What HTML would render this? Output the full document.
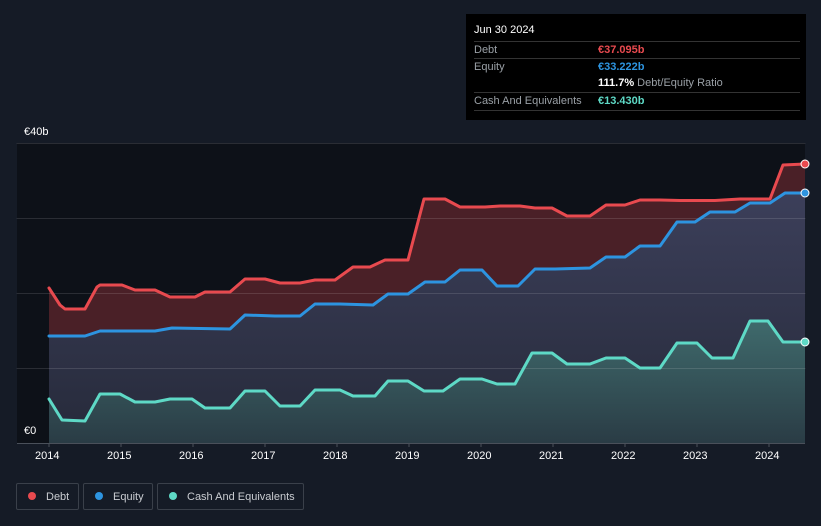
<!DOCTYPE html>
<html><head><meta charset="utf-8"><style>
body{margin:0;width:821px;height:526px;background:#151b26;font-family:"Liberation Sans",sans-serif;overflow:hidden;position:relative}
.tt{position:absolute;left:466px;top:14px;width:340px;height:106px;background:#000;color:#fff;font-size:11px}
.tt .r{position:absolute;left:8px;right:6px;border-top:1px solid #333;height:17px;line-height:17px;color:#9aa0a6}
.tt .v{position:absolute;left:124px}
.leg{position:absolute;top:483px;height:27px;border:1px solid #3a404a;border-radius:2px;color:#c9ccd1;font-size:11px;line-height:27px;box-sizing:border-box}
.dot{display:inline-block;width:8px;height:8px;border-radius:50%;margin:0 10px 0 11px;vertical-align:-0px}
.ax{position:absolute;color:#fff;font-size:11px}
</style></head><body>
<svg width="821" height="526" style="position:absolute;left:0;top:0">
<rect x="17" y="143" width="788" height="300" fill="#0d1118"/>
<defs>
<linearGradient id="eg" x1="0" y1="0" x2="0" y2="1"><stop offset="0" stop-color="#3c3f5a"/><stop offset="1" stop-color="#262a3a"/></linearGradient>
<linearGradient id="cg" x1="0" y1="0" x2="0" y2="1"><stop offset="0" stop-color="#3f6a6c"/><stop offset="1" stop-color="#2a3c45"/></linearGradient>
</defs>
<g id="paths" stroke-linejoin="round" stroke-linecap="round">
<path fill="#4a2027" d="M49,288 L60,305 L65,309 L85,309 L97,287 L100,285 L122,285 L135,290 L155,290 L170,297 L195,297 L205,292 L230,292 L245,279 L265,279 L280,283 L300,283 L315,280 L335,280 L353,267 L370,267 L385,260 L408,260 L424,199 L445,199 L460,207 L485,207 L500,206 L520,206 L535,208 L552,208 L567,216 L590,216 L606,205 L625,205 L640,200 L660,200 L680,200.5 L715,200.5 L740,199 L770,199 L783,165 L805,164 L805,443 L49,443Z"/>
<path fill="url(#eg)" d="M49,336 L85,336 L100,331 L155,331 L172,328 L230,329 L245,315 L275,316 L300,316 L315,304 L340,304 L373,305 L388,294 L408,294 L425,282 L445,282 L460,270 L482,270 L497,286 L518,286 L535,269 L555,269 L590,268 L606,257 L625,257 L640,246 L660,246 L677,222 L695,222 L710,212 L735,212 L750,203 L770,203 L785,193 L805,193 L805,443 L49,443Z"/>
<path fill="url(#cg)" d="M49,399 L62,420 L85,421 L100,394 L120,394 L135,402 L155,402 L170,399 L192,399 L205,408 L230,408 L245,391 L265,391 L280,406 L300,406 L315,390 L340,390 L353,396 L375,396 L388,381 L408,381 L424,391 L443,391 L460,379 L482,379 L497,384 L515,384 L532,353 L552,353 L567,364 L590,364 L606,358 L625,358 L640,368 L660,368 L677,343 L697,343 L712,358 L733,358 L750,321 L768,321 L783,342 L805,342 L805,443 L49,443Z"/>
<g stroke="#ffffff" stroke-opacity="0.12" stroke-width="1"><line x1="17" y1="143.5" x2="805" y2="143.5"/><line x1="17" y1="218.5" x2="805" y2="218.5"/><line x1="17" y1="293.5" x2="805" y2="293.5"/><line x1="17" y1="368.5" x2="805" y2="368.5"/></g>
<path fill="none" stroke="#e84a4f" stroke-width="3" d="M49,288 L60,305 L65,309 L85,309 L97,287 L100,285 L122,285 L135,290 L155,290 L170,297 L195,297 L205,292 L230,292 L245,279 L265,279 L280,283 L300,283 L315,280 L335,280 L353,267 L370,267 L385,260 L408,260 L424,199 L445,199 L460,207 L485,207 L500,206 L520,206 L535,208 L552,208 L567,216 L590,216 L606,205 L625,205 L640,200 L660,200 L680,200.5 L715,200.5 L740,199 L770,199 L783,165 L805,164"/>
<path fill="none" stroke="#2d94e0" stroke-width="3" d="M49,336 L85,336 L100,331 L155,331 L172,328 L230,329 L245,315 L275,316 L300,316 L315,304 L340,304 L373,305 L388,294 L408,294 L425,282 L445,282 L460,270 L482,270 L497,286 L518,286 L535,269 L555,269 L590,268 L606,257 L625,257 L640,246 L660,246 L677,222 L695,222 L710,212 L735,212 L750,203 L770,203 L785,193 L805,193"/>
<path fill="none" stroke="#5ed9c6" stroke-width="3" d="M49,399 L62,420 L85,421 L100,394 L120,394 L135,402 L155,402 L170,399 L192,399 L205,408 L230,408 L245,391 L265,391 L280,406 L300,406 L315,390 L340,390 L353,396 L375,396 L388,381 L408,381 L424,391 L443,391 L460,379 L482,379 L497,384 L515,384 L532,353 L552,353 L567,364 L590,364 L606,358 L625,358 L640,368 L660,368 L677,343 L697,343 L712,358 L733,358 L750,321 L768,321 L783,342 L805,342"/>
</g>
<circle cx="805" cy="164" r="4" fill="#e84a4f" stroke="#fff" stroke-width="1"/>
<circle cx="805" cy="193" r="4" fill="#2d94e0" stroke="#fff" stroke-width="1"/>
<circle cx="805" cy="342" r="4" fill="#5ed9c6" stroke="#fff" stroke-width="1"/>
<line x1="17" y1="443.5" x2="805" y2="443.5" stroke="#4a505a"/>
<g stroke="#4a505a"><line x1="49" y1="443" x2="49" y2="447"/><line x1="121" y1="443" x2="121" y2="447"/><line x1="193" y1="443" x2="193" y2="447"/><line x1="265" y1="443" x2="265" y2="447"/><line x1="337" y1="443" x2="337" y2="447"/><line x1="409" y1="443" x2="409" y2="447"/><line x1="481" y1="443" x2="481" y2="447"/><line x1="553" y1="443" x2="553" y2="447"/><line x1="625" y1="443" x2="625" y2="447"/><line x1="697" y1="443" x2="697" y2="447"/><line x1="769" y1="443" x2="769" y2="447"/></g>
</svg>
<div class="ax" style="left:24px;top:126px">€40b</div>
<div class="ax" style="left:24px;top:425px">€0</div>
<div class="ax" style="left:35px;top:450px">2014</div>
<div class="ax" style="left:107px;top:450px">2015</div>
<div class="ax" style="left:179px;top:450px">2016</div>
<div class="ax" style="left:251px;top:450px">2017</div>
<div class="ax" style="left:323px;top:450px">2018</div>
<div class="ax" style="left:395px;top:450px">2019</div>
<div class="ax" style="left:467px;top:450px">2020</div>
<div class="ax" style="left:539px;top:450px">2021</div>
<div class="ax" style="left:611px;top:450px">2022</div>
<div class="ax" style="left:683px;top:450px">2023</div>
<div class="ax" style="left:755px;top:450px">2024</div>
<div class="tt">
<div style="position:absolute;left:8px;top:10px;font-size:11px;color:#fff">Jun 30 2024</div>
<div class="r" style="top:27px">Debt<span class="v" style="color:#e84a4f;font-weight:bold">€37.095b</span></div>
<div class="r" style="top:44px">Equity<span class="v" style="color:#2d94e0;font-weight:bold">€33.222b</span></div>
<div class="r" style="top:61px;border-top:none"><span class="v"><b style="color:#fff">111.7%</b> Debt/Equity Ratio</span></div>
<div class="r" style="top:78px">Cash And Equivalents<span class="v" style="color:#5ed9c6;font-weight:bold">€13.430b</span></div>
<div class="r" style="top:96px;height:0"></div>
</div>
<div class="leg" style="left:16px;width:63px"><span class="dot" style="background:#e84a4f"></span>Debt</div>
<div class="leg" style="left:83px;width:70px"><span class="dot" style="background:#2d94e0"></span>Equity</div>
<div class="leg" style="left:157px;width:147px"><span class="dot" style="background:#5ed9c6"></span>Cash And Equivalents</div>
</body></html>
